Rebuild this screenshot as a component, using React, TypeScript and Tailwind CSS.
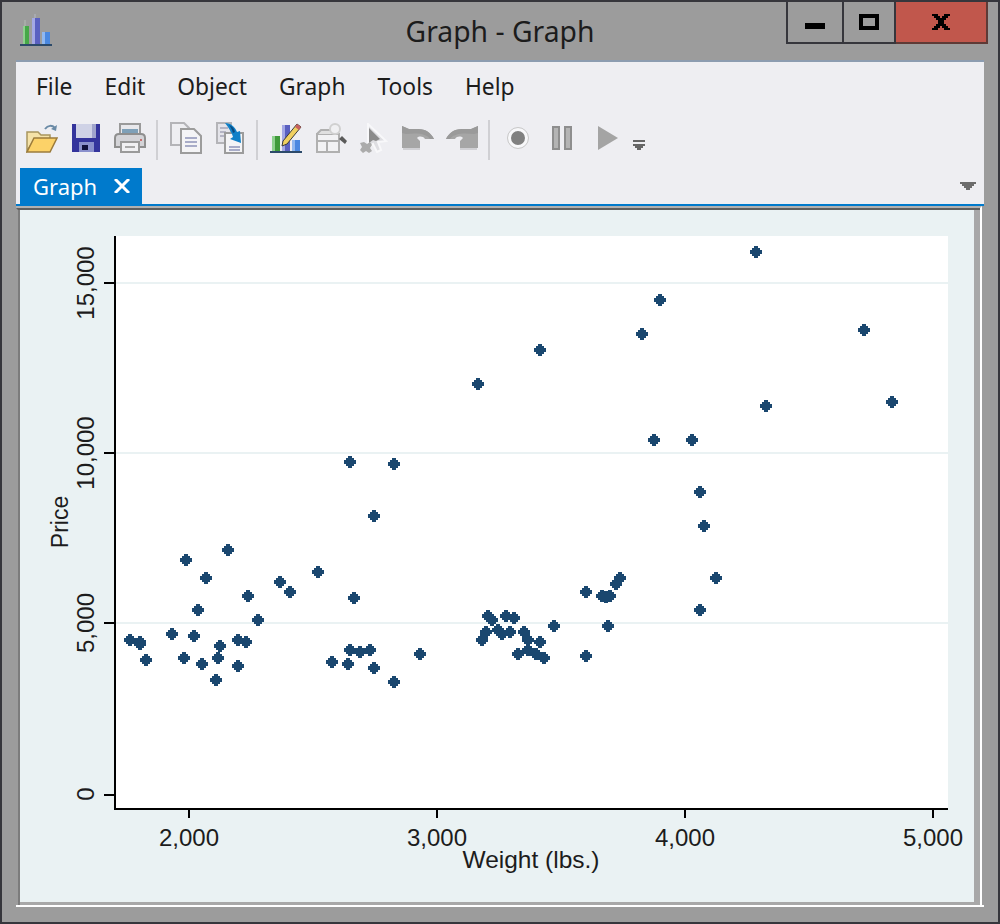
const points: [number, number][] = [
  [756, 252], [660, 300], [642, 334], [864, 330], [540, 350], [478, 384], [766, 406], [892, 402],
  [654, 440], [692, 440], [700, 492], [704, 526], [350, 462], [394, 464], [374, 516], [228, 550],
  [186, 560], [206, 578], [280, 582], [290, 592], [318, 572], [248, 596], [354, 598], [198, 610],
  [258, 620], [716, 578], [700, 610], [130, 640], [140, 642], [140, 644], [172, 634], [194, 636],
  [146, 660], [184, 658], [202, 664], [220, 646], [218, 658], [216, 680], [238, 640], [246, 642],
  [238, 666], [350, 650], [360, 652], [370, 650], [332, 662], [348, 664], [374, 668], [394, 682],
  [420, 654], [620, 578], [616, 584], [586, 592], [602, 596], [606, 597], [610, 596], [488, 616],
  [492, 620], [506, 616], [514, 618], [554, 626], [608, 626], [486, 632], [482, 640], [498, 630],
  [502, 634], [510, 632], [524, 632], [528, 640], [540, 642], [518, 654], [528, 650], [536, 654],
  [544, 658], [586, 656],
];

const marker = "M-2,-6h4v2h2v2h2v4h-2v2h-2v2h-4v-2h-2v-2h-2v-4h2v-2h2z";

function Chart() {
  return (
    <svg width="954" height="692" viewBox="20 210 954 692" className="block">
      <rect x="20" y="210" width="954" height="692" fill="#eaf2f3" />
      <rect x="116" y="236" width="832" height="572" fill="#ffffff" />
      {[283, 453, 623].map((y) => (
        <rect key={y} x="116" y={y - 1} width="832" height="2" fill="#eaf2f3" />
      ))}
      <g fill="#000000" shapeRendering="crispEdges">
        <rect x="114" y="236" width="2" height="574" />
        <rect x="114" y="808" width="834" height="2" />
        {[282, 452, 622, 794].map((y) => (
          <rect key={y} x="104" y={y} width="10" height="2" />
        ))}
        {[188, 436, 684, 932].map((x) => (
          <rect key={x} x={x} y="810" width="2" height="8" />
        ))}
      </g>
      <g fontFamily="'Liberation Sans', Arial, sans-serif" fontSize="24" fill="#1c1c1c" textAnchor="middle">
        {[
          ["2,000", 189],
          ["3,000", 437],
          ["4,000", 685],
          ["5,000", 933],
        ].map(([label, x]) => (
          <text key={label} x={x} y="846">
            {label}
          </text>
        ))}
        {[
          ["0", 794],
          ["5,000", 623],
          ["10,000", 453],
          ["15,000", 283],
        ].map(([label, y]) => (
          <text key={label} transform={`translate(94 ${y}) rotate(-90)`}>
            {label}
          </text>
        ))}
        <text x="531" y="868" fontSize="24.5">Weight (lbs.)</text>
        <text transform="translate(68 522) rotate(-90)" fontSize="23">Price</text>
      </g>
      <g fill="#1a476f" shapeRendering="crispEdges">
        {points.map(([x, y], i) => (
          <path key={i} d={marker} transform={`translate(${x} ${y})`} />
        ))}
      </g>
    </svg>
  );
}

function AppIcon() {
  return (
    <svg width="36" height="36" viewBox="0 0 36 36" className="blur-[0.7px]">
      <rect x="5" y="14" width="6" height="18" fill="#46a848" />
      <rect x="5" y="14" width="2" height="18" fill="#8fd08f" />
      <rect x="6" y="8" width="2" height="6" fill="#a8aca8" />
      <rect x="14" y="6" width="8" height="26" fill="#5a60c0" />
      <rect x="14" y="6" width="3" height="26" fill="#a4a8e4" />
      <rect x="16" y="2" width="2" height="4" fill="#a8aab0" />
      <rect x="24" y="20" width="8" height="12" fill="#4a88e0" />
      <rect x="24" y="20" width="3" height="12" fill="#90b8f0" />
      <rect x="2" y="32" width="32" height="2" fill="#2c4a6a" />
    </svg>
  );
}

function OpenIcon() {
  return (
    <svg width="32" height="30" viewBox="0 0 32 30">
      <path d="M19 6c3-4 7-4 10-1" fill="none" stroke="#6a8aa6" strokeWidth="2" />
      <path d="M31 2l-1 6-5-2z" fill="#6a8aa6" />
      <path d="M1 9h11l3 3h9v5H8L1 28z" fill="#f5e2a8" stroke="#a8955e" strokeWidth="1.5" />
      <path d="M8 15h23l-7 14H1z" fill="#fcd268" stroke="#9c7c3c" strokeWidth="1.5" />
    </svg>
  );
}

function SaveIcon() {
  return (
    <svg width="28" height="28" viewBox="0 0 28 28">
      <path d="M0 0h28v28H0z" fill="#34349c" />
      <path d="M4 0h20v14H4z" fill="#cfd2e6" />
      <path d="M20 0h4v14h-4z" fill="#a0a4cc" />
      <path d="M7 18h15v10H7z" fill="#8a90cc" />
      <path d="M10 21h6v5h-6z" fill="#11113c" />
    </svg>
  );
}

function PrintIcon() {
  return (
    <svg width="32" height="32" viewBox="0 0 32 32">
      <path d="M6 2h20v12H6z" fill="#e8e8ec" stroke="#9a9a9a" strokeWidth="2" />
      <path d="M8 7h16v6H8z" fill="#7ea0b8" />
      <path d="M1 16c0-3 2-4 4-4h22c2 0 4 1 4 4v9H1z" fill="#d4d4d8" stroke="#8f8f8f" strokeWidth="2" />
      <path d="M7 20h18v10H7z" fill="#f0f0f2" stroke="#9a9a9a" strokeWidth="2" />
      <path d="M11 24h10v2H11z" fill="#a8a8a8" />
      <rect x="26" y="17" width="2" height="2" fill="#c87070" />
    </svg>
  );
}

function CopyIcon() {
  return (
    <svg width="32" height="32" viewBox="0 0 32 32">
      <path d="M1 1h13l5 5v17H1z" fill="#eeeef2" stroke="#b4b4b8" strokeWidth="2" />
      <path d="M11 7h13l7 7v17H11z" fill="#f4f4f6" stroke="#9c9c9c" strokeWidth="2" />
      <path d="M15 16h12M15 20h12M15 24h12" stroke="#a8acc8" strokeWidth="2" />
    </svg>
  );
}

function PasteIcon() {
  return (
    <svg width="28" height="32" viewBox="0 0 28 32">
      <path d="M1 1h14v20H1z" fill="#e4e4ea" stroke="#b4b4b8" strokeWidth="2" />
      <path d="M4 6h8M4 10h6M4 14h6" stroke="#b4b4c4" strokeWidth="2" />
      <path d="M9 11h18v20H9z" fill="#f4f4f6" stroke="#9c9c9c" strokeWidth="2" />
      <path d="M13 25h11M13 28h11" stroke="#a8acc8" strokeWidth="2" />
      <path d="M9 1c6 0 10 4 12 9l3-1 1 12-11-4 3-2c-1-4-4-9-8-14z" fill="#1080c8" />
      <path d="M13 3c3 1 5 3 6 7l-2 1c-1-3-2-6-4-8z" fill="#0a4a80" />
    </svg>
  );
}

function GraphEditIcon() {
  return (
    <svg width="32" height="32" viewBox="0 0 32 32">
      <rect x="2" y="14" width="8" height="15" fill="#3f9a3a" />
      <rect x="2" y="14" width="3" height="15" fill="#8fd08f" />
      <rect x="12" y="3" width="8" height="26" fill="#5a60c0" />
      <rect x="12" y="3" width="3" height="26" fill="#a4a8e4" />
      <rect x="22" y="18" width="8" height="11" fill="#4a88e0" />
      <rect x="22" y="18" width="3" height="11" fill="#90b8f0" />
      <rect x="0" y="29" width="32" height="2" fill="#2c4a6a" />
      <path d="M13 19L27 2l4 3-14 17-5 2z" fill="#f0d060" stroke="#3a3a3a" strokeWidth="1" />
      <path d="M27 2l4 3-2 3-4-3z" fill="#c86060" />
    </svg>
  );
}

function DisabledBoxIcon() {
  return (
    <svg width="32" height="32" viewBox="0 0 32 32">
      <path d="M1 12h22v18H1z" fill="#f2f2f4" stroke="#b0b0b0" strokeWidth="2" />
      <path d="M1 12l4-4h16v4" fill="#e0e0e0" stroke="#b0b0b0" strokeWidth="2" />
      <path d="M1 19h22M11 19v11" stroke="#b0b0b0" strokeWidth="2" />
      <circle cx="19" cy="7" r="5" fill="#f0f0f2" stroke="#d0d0d0" strokeWidth="2" />
      <path d="M23 17l3-3 5 5-2 3z" fill="#5a5a5a" />
    </svg>
  );
}

function CursorIcon() {
  return (
    <svg width="28" height="30" viewBox="0 0 28 30">
      <path d="M8 1l18 17-8 1 3 8-4 2-4-8-5 4z" fill="#dedee2" stroke="#f8f8fa" strokeWidth="2" />
      <path d="M9 5v15l4-3 3 1 4-2z" fill="#8a8a8a" />
      <path d="M0 20l4-1 3 2 3-2 2 3-2 3 2 3-3 2-3-2-3 2-3-3 2-3z" fill="#ababab" />
    </svg>
  );
}

function UndoIcon() {
  return (
    <svg width="32" height="26" viewBox="0 0 32 26">
      <path d="M0 1l7 3h9c8 0 13 4 16 10h-9c-2-3-6-3-8-1l3 3v7H0z" fill="#a6a6a6" />
      <path d="M0 1l7 3h9c8 0 13 4 16 10h-4C24 8 14 8 4 9L0 8z" fill="#9a9a9a" />
      <path d="M1 23h17v2H1z" fill="#d0d0d4" />
    </svg>
  );
}

function RedoIcon() {
  return (
    <svg width="32" height="26" viewBox="0 0 32 26">
      <path d="M32 1l-7 3h-9C8 4 3 8 0 14h9c2-3 6-3 8-1l-3 3v7h18z" fill="#a6a6a6" />
      <path d="M32 1l-7 3h-9C8 4 3 8 0 14h4C8 8 18 8 28 9l4-1z" fill="#9a9a9a" />
      <path d="M14 23h17v2H14z" fill="#d0d0d4" />
    </svg>
  );
}

function Separator() {
  return <div className="w-[2px] h-[40px] bg-[#d0d0d4]" />;
}

export default function App() {
  return (
    <div className="w-[1000px] h-[924px] flex flex-col border-2 border-[#36363c] bg-[#9c9c9c]">
      {/* title bar */}
      <div className="h-[58px] shrink-0 grid grid-cols-[1fr_auto_1fr] pl-[16px] pr-[10px]">
        <div className="pt-[10px]">
          <AppIcon />
        </div>
        <div className="pt-[7px] pr-[6px] text-[28.3px] leading-[44px] text-[#1c1c1c] font-['Noto_Sans',sans-serif]">
          Graph - Graph
        </div>
        <div className="flex justify-end items-start">
          <div className="w-[58px] h-[42px] border-2 border-t-0 border-[#36363c] flex items-center justify-center">
            <div className="w-[20px] h-[6px] bg-black mt-[8px]" />
          </div>
          <div className="w-[52px] h-[42px] border-2 border-t-0 border-l-0 border-[#36363c] flex items-center justify-center">
            <div className="w-[20px] h-[16px] border-[4px] border-black" />
          </div>
          <div className="w-[92px] h-[42px] border-2 border-t-0 border-l-0 border-[#5e3a36] bg-[#c1574c] flex items-center justify-center">
            <svg width="18" height="16" viewBox="0 0 18 16" shapeRendering="crispEdges">
              <path d="M0 0h6v2h2v2h2V2h2V0h6v2h-2v2h-2v2h-2v4h2v2h2v2h2v2h-6v-2h-2v-2H8v2H6v2H0v-2h2v-2h2v-2h2V6H4V4H2V2H0z" fill="#000" />
            </svg>
          </div>
        </div>
      </div>

      {/* client area */}
      <div className="flex-1 mx-[14px] mb-[15px] flex flex-col min-h-0">
        <div className="h-[144px] shrink-0 bg-[#eeeef2] border-t-2 border-[#8c9cb0] flex flex-col">
          <div className="h-[54px] flex items-center pl-[4px] pb-[4px] text-[22.8px] text-[#1c1c1c] font-['Noto_Sans',sans-serif]">
            {["File", "Edit", "Object", "Graph", "Tools", "Help"].map((m) => (
              <span key={m} className="px-[16px]">
                {m}
              </span>
            ))}
          </div>
          <div className="h-[48px] flex items-center pl-[10px]">
            <div className="flex items-center gap-[14px] mb-[4px] blur-[0.5px]">
              <OpenIcon />
              <SaveIcon />
              <PrintIcon />
            </div>
            <div className="ml-[10px] mr-[12px]">
              <Separator />
            </div>
            <div className="flex items-center gap-[14px] mb-[4px] blur-[0.5px]">
              <CopyIcon />
              <PasteIcon />
            </div>
            <div className="ml-[12px] mr-[12px]">
              <Separator />
            </div>
            <div className="flex items-center gap-[14px] mb-[4px] blur-[0.5px]">
              <GraphEditIcon />
              <div className="-mr-[2px]">
                <DisabledBoxIcon />
              </div>
              <CursorIcon />
              <div className="-mr-[2px]">
                <UndoIcon />
              </div>
              <RedoIcon />
            </div>
            <div className="ml-[10px] mr-[18px]">
              <Separator />
            </div>
            <div className="w-[20px] h-[20px] mb-[4px] rounded-full bg-[#808080] border-[3px] border-[#f8f8fa] outline outline-1 outline-[#c8c8c8] blur-[0.4px]" />
            <div className="ml-[24px] mb-[4px] flex gap-[4px] blur-[0.4px]">
              <div className="w-[8px] h-[24px] bg-[#b4b4b4] border-2 border-[#8e8e8e]" />
              <div className="w-[8px] h-[24px] bg-[#b4b4b4] border-2 border-[#8e8e8e]" />
            </div>
            <svg className="ml-[26px] mb-[4px] blur-[0.4px]" width="20" height="24" viewBox="0 0 20 24">
              <path d="M0 0l20 12L0 24z" fill="#a4a4a4" />
            </svg>
            <svg className="ml-[15px] mt-[12px]" width="12" height="12" viewBox="0 0 12 12" shapeRendering="crispEdges">
              <path d="M0 0h12v2H0zM0 4h12v2h-2v2H8v2H4V8H2V6H0z" fill="#666666" />
            </svg>
          </div>
          <div className="flex-1 flex items-end justify-between pl-[4px] pr-[8px]">
            <div className="h-[36px] w-[122px] bg-[#007acc] text-white flex items-center pl-[13px] gap-[17px] text-[22px] font-['Noto_Sans',sans-serif]">
              <span>Graph</span>
              <svg width="16" height="14" viewBox="0 0 16 14">
                <path d="M1 0l14 14M15 0L1 14" stroke="#ffffff" strokeWidth="3" />
              </svg>
            </div>
            <svg className="mb-[14px]" width="16" height="8" viewBox="0 0 16 8" shapeRendering="crispEdges">
              <path d="M0 0h16v2h-2v2h-2v2h-2v2H6V6H4V4H2V2H0z" fill="#6c6c6c" />
            </svg>
          </div>
        </div>
        <div className="h-[2px] shrink-0 bg-[#007acc]" />
        <div className="flex-1 min-h-0 border-b-2 border-white pr-[2px]">
          <div className="h-full border-t-2 border-t-[#b0b0b0] border-r-2 border-r-white">
            <div className="h-full border-t-2 border-t-[#5e5e5e] border-l-2 border-l-[#9c9c9c]">
              <div className="h-full border-l-2 border-l-[#7c7c7c] pr-[6px] bg-[#a8a8a8]">
                <Chart />
              </div>
            </div>
          </div>
        </div>
      </div>
    </div>
  );
}
